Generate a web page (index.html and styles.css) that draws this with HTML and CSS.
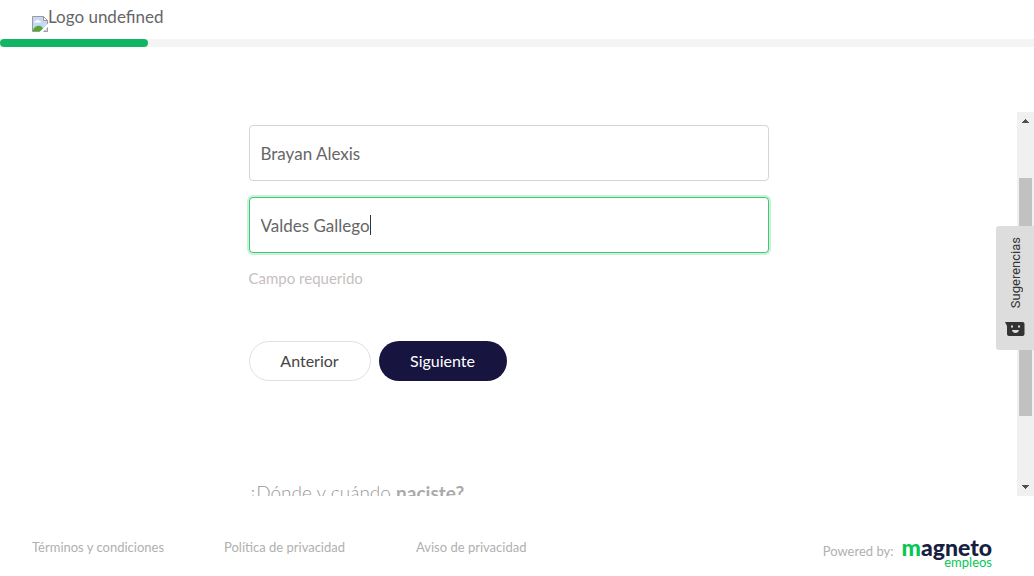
FILE: index.html
```html
<!DOCTYPE html>
<html lang="es">
<head>
<meta charset="utf-8">
<meta name="viewport" content="width=device-width, initial-scale=1">
<title>Registro</title>
<link rel="stylesheet" href="styles.css">
</head>
<body>
<header class="header">
  <svg class="header-icon" width="16" height="16" viewBox="0 0 16 16" aria-hidden="true">
    <path d="M.5.5h11l4 4v11H.5z" fill="#c6d8f6" stroke="#9a9a9a"/>
    <path d="M2 6.500c0-1 1-1.500 2-1.500.5-1.500 3-1.500 3.500 0 1 0 1.500.5 1.500 1.500z" fill="#fff"/>
    <path d="M1 15v-1.500C3 10 7 8.500 10 11l3 4z" fill="#55a832"/>
    <path d="M11.500.5v4h4z" fill="#fff" stroke="#9a9a9a"/>
    <path d="M16 7.500 7.500 16h3.500l5-5z" fill="#fff"/>
  </svg>
  <span class="header-name">Logo undefined</span>
</header>
<div class="progress" role="progressbar" aria-label="Progreso" aria-valuenow="14" aria-valuemin="0" aria-valuemax="100"><div class="progress-bar" style="width:14.3%"></div></div>

<div class="viewport">
  <main class="content">
    <form class="form">
      <input class="field" type="text" aria-label="Nombres" value="Brayan Alexis">
      <div class="field-wrap">
        <input class="field field-active" type="text" aria-label="Apellidos" value="Valdes Gallego">
        <span class="caret-line" aria-hidden="true"><span class="caret-space">Valdes Gallego</span><span class="caret"></span></span>
      </div>
      <p class="hint">Campo requerido</p>
      <div class="actions">
        <button class="btn btn-back" type="button">Anterior</button>
        <button class="btn btn-next" type="button">Siguiente</button>
      </div>
      <h2 class="next-question">¿Dónde y cuándo <strong>naciste?</strong></h2>
    </form>
  </main>
  <div class="scrollbar" aria-hidden="true">
    <svg width="17" height="17" viewBox="0 0 17 17" shape-rendering="crispEdges"><path d="M8 7h1v1h1v1h1v1h1v1H5v-1h1V9h1V8h1z" fill="#505050"/></svg>
    <div class="track"><div class="thumb"></div></div>
    <svg width="17" height="17" viewBox="0 0 17 17" shape-rendering="crispEdges"><path d="M5 6h7v1h-1v1h-1v1H9v1H8V9H7V8H6V7H5z" fill="#505050"/></svg>
  </div>
</div>

<footer class="footer">
  <nav class="links">
    <a href="#terminos">Términos y condiciones</a>
    <a href="#politica">Política de privacidad</a>
    <a href="#aviso">Aviso de privacidad</a>
  </nav>
  <div class="powered">
    <span>Powered by:</span>
    <span class="brand"><span class="brand-main"><span class="brand-m">m</span>agneto</span><span class="brand-sub">empleos</span></span>
  </div>
</footer>

<button class="feedback" type="button">
  <span class="feedback-text">Sugerencias</span>
  <svg width="20" height="16" viewBox="0 0 20 16" aria-hidden="true">
    <path d="M0 1h17.500a2 2 0 0 1 2 2v10a2 2 0 0 1-2 2H4a2 2 0 0 1-2-2V5z" fill="#333"/>
    <path d="M6 4.500h2v2H6zm7 0h2v2h-2z" fill="#ddd"/>
    <path d="M7 9h7c-.5 4-6.500 4-7 0z" fill="#ddd"/>
  </svg>
</button>
</body>
</html>
```
FILE: styles.css
```css
* { box-sizing: border-box; }

body {
  margin: 0;
  min-height: 100vh;
  display: flex;
  flex-direction: column;
  background: #fff;
  color: #666;
  font-family: Lato, "Open Sans", sans-serif;
  font-size: 16px;
}

.header {
  display: flex;
  align-items: flex-start;
  padding: 6px 32px 7px;
}
.header-icon { margin-top: 10px; }
.header-name { font-size: 17px; line-height: 22px; }

.progress { height: 8px; background: #f4f4f4; }
.progress-bar { height: 100%; border-radius: 4px; background: #11b564; }

.viewport {
  display: flex;
  flex: 1 1 0;
  min-height: 0;
  height: 0;
  margin-top: 65px;
}
.content { flex: 1; overflow: hidden; padding: 13px 16px 0; }
.form { max-width: 520px; margin: 0 auto; }

.field {
  display: block;
  width: 100%;
  height: 56px;
  padding: 0 11px;
  border: 1px solid #d5d5d5;
  border-radius: 4px;
  background: #fff;
  color: #666;
  font-family: inherit;
  font-size: 17px;
  outline: none;
}
.field-wrap { position: relative; margin-top: 16px; }
.field-active { border-color: #3ecb70; box-shadow: 0 0 0 2px #cdf0da; }
.caret-line {
  position: absolute;
  inset: 0 12px;
  display: flex;
  align-items: center;
  pointer-events: none;
  font-size: 17px;
}
.caret-space { visibility: hidden; }
.caret { width: 1px; height: 20px; background: #333; }

.hint {
  margin: 15px 0 0;
  color: #c5bfbf;
  font-size: 15px;
  line-height: 20px;
}
.actions { display: flex; gap: 8px; margin-top: 53px; }
.btn {
  height: 40px;
  padding: 0 0 2px;
  border-radius: 20px;
  font-family: inherit;
  font-size: 16px;
}
.btn-back { width: 122px; border: 1px solid #e0e0e0; background: #fff; color: #444; }
.btn-next { width: 128px; border: 0; background: #17143f; color: #fff; }
.next-question {
  margin: 100px 0 0;
  color: #999;
  font-size: 19px;
  font-weight: 300;
  line-height: 24px;
}
.next-question strong { color: #aaa; font-weight: 700; }

.scrollbar {
  display: flex;
  flex-direction: column;
  width: 17px;
  background: #f0f0f0;
}
.track { flex: 1; padding: 49px 2px 63px; }
.thumb { height: 100%; background: #c1c1c1; }

.footer {
  display: flex;
  justify-content: space-between;
  height: 80px;
  padding: 40px 42px 0 32px;
  color: #b0b0b0;
  font-size: 13px;
}
.links { display: flex; padding-top: 3px; }
.links a { width: 192px; color: inherit; line-height: 16px; text-decoration: none; }
.powered { display: flex; gap: 8px; line-height: 31px; white-space: nowrap; }
.brand { display: flex; flex-direction: column; }
.brand-main { color: #17213f; font-size: 23px; font-weight: 900; line-height: 22px; }
.brand-m { color: #05c756; }
.brand-sub { align-self: flex-end; color: #05c756; font-size: 13px; line-height: 8px; }

.feedback {
  position: fixed;
  top: 226px;
  right: 0;
  display: flex;
  flex-direction: column;
  align-items: center;
  justify-content: space-between;
  width: 38px;
  height: 124px;
  padding: 11px 0 13px;
  border: 0;
  border-radius: 3px 0 0 3px;
  background: #ddd;
  color: #333;
  font-family: Roboto, sans-serif;
  font-size: 13px;
}
.feedback-text { writing-mode: vertical-rl; transform: rotate(180deg); }
```
